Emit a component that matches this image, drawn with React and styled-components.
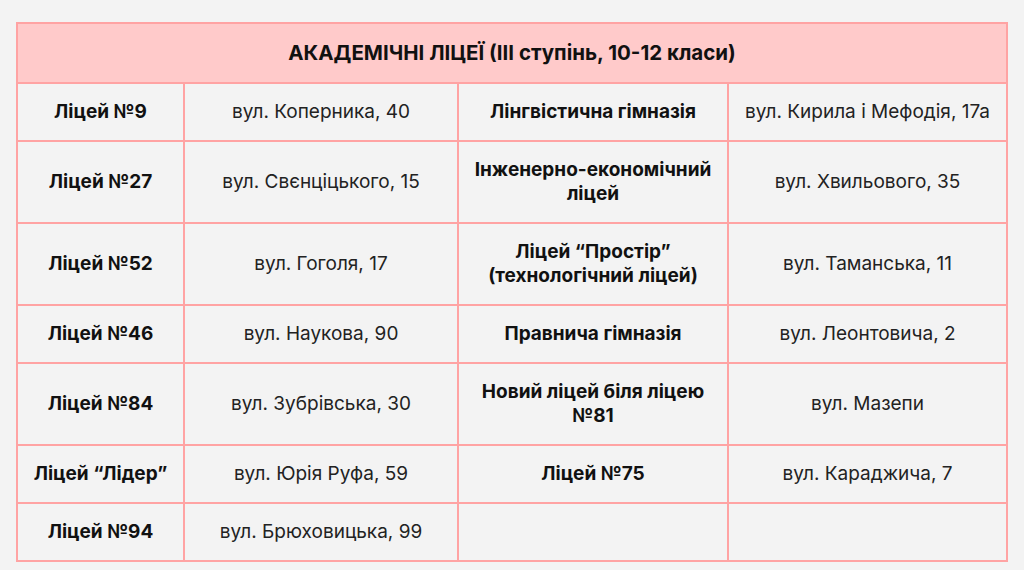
import React from "react";
import styled, { createGlobalStyle } from "styled-components";

const Global = createGlobalStyle`
  html, body { margin: 0; padding: 0; background: #f3f3f3; }
  body { font-family: Inter, "Noto Sans", sans-serif; color: #1a1a1a; }
`;

const Page = styled.div`
  padding: 22px 17px 0 16px;
`;

const Table = styled.table`
  width: 990px;
  border-collapse: collapse;
  table-layout: fixed;
  border: 2px solid #ffa3a3;
`;

const Col = styled.col`
  width: ${(p) => p.$w}px;
`;

const HeadCell = styled.th`
  background: #ffcaca;
  border: 2px solid #ffa3a3;
  padding: 17px 10px;
  font-size: 20.5px;
  font-weight: 700;
  line-height: 24px;
  text-align: center;
  color: #111;
`;

const Cell = styled.td`
  border: 2px solid #ffa3a3;
  padding: 16px 10px;
  font-size: 19px;
  line-height: 24px;
  text-align: center;
  vertical-align: middle;
  font-weight: ${(p) => (p.$bold ? 700 : 400)};
  color: ${(p) => (p.$bold ? "#111" : "#222")};
`;

const rows = [
  ["Ліцей №9", "вул. Коперника, 40", "Лінгвістична гімназія", "вул. Кирила і Мефодія, 17а"],
  ["Ліцей №27", "вул. Свєнціцького, 15", "Інженерно-економічний ліцей", "вул. Хвильового, 35"],
  ["Ліцей №52", "вул. Гоголя, 17", "Ліцей “Простір” (технологічний ліцей)", "вул. Таманська, 11"],
  ["Ліцей №46", "вул. Наукова, 90", "Правнича гімназія", "вул. Леонтовича, 2"],
  ["Ліцей №84", "вул. Зубрівська, 30", "Новий ліцей біля ліцею №81", "вул. Мазепи"],
  ["Ліцей “Лідер”", "вул. Юрія Руфа, 59", "Ліцей №75", "вул. Караджича, 7"],
  ["Ліцей №94", "вул. Брюховицька, 99", "", ""],
];

export default function App() {
  return (
    <Page>
      <Global />
      <Table>
        <colgroup>
          <Col $w={167} />
          <Col $w={274} />
          <Col $w={270} />
          <Col $w={279} />
        </colgroup>
        <thead>
          <tr>
            <HeadCell colSpan={4}>АКАДЕМІЧНІ ЛІЦЕЇ (ІІІ ступінь, 10-12 класи)</HeadCell>
          </tr>
        </thead>
        <tbody>
          {rows.map((r, i) => (
            <tr key={i}>
              <Cell $bold>{r[0]}</Cell>
              <Cell>{r[1]}</Cell>
              <Cell $bold>{r[2]}</Cell>
              <Cell>{r[3]}</Cell>
            </tr>
          ))}
        </tbody>
      </Table>
    </Page>
  );
}
